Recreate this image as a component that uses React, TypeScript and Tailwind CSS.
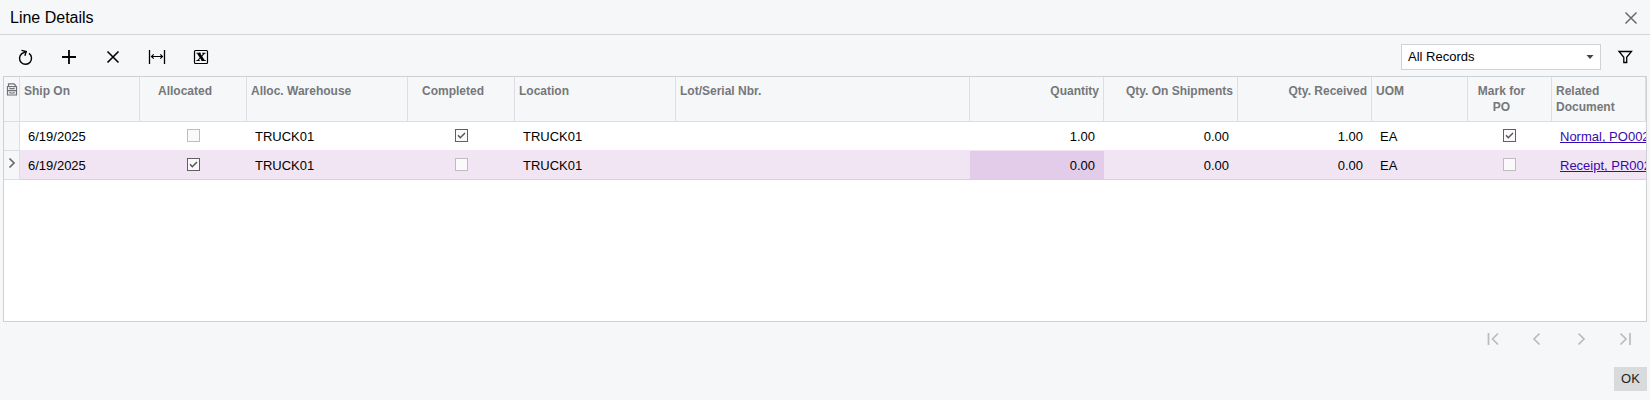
import { useState } from "react";
import type { ReactNode } from "react";
import clsx from "clsx";

type Row = {
  shipOn: string;
  allocated: boolean;
  warehouse: string;
  completed: boolean;
  location: string;
  lot: string;
  quantity: string;
  onShipments: string;
  received: string;
  uom: string;
  markForPo: boolean;
  document: string;
};

const initialRows: Row[] = [
  {
    shipOn: "6/19/2025",
    allocated: false,
    warehouse: "TRUCK01",
    completed: true,
    location: "TRUCK01",
    lot: "",
    quantity: "1.00",
    onShipments: "0.00",
    received: "1.00",
    uom: "EA",
    markForPo: true,
    document: "Normal, PO002",
  },
  {
    shipOn: "6/19/2025",
    allocated: true,
    warehouse: "TRUCK01",
    completed: false,
    location: "TRUCK01",
    lot: "",
    quantity: "0.00",
    onShipments: "0.00",
    received: "0.00",
    uom: "EA",
    markForPo: false,
    document: "Receipt, PR002",
  },
];

type Column = {
  key: keyof Row;
  title: string;
  width: string;
  kind: "text" | "check" | "number" | "link";
};

const columns: Column[] = [
  { key: "shipOn", title: "Ship On", width: "w-[120px]", kind: "text" },
  { key: "allocated", title: "Allocated", width: "w-[107px]", kind: "check" },
  { key: "warehouse", title: "Alloc. Warehouse", width: "w-[161px]", kind: "text" },
  { key: "completed", title: "Completed", width: "w-[107px]", kind: "check" },
  { key: "location", title: "Location", width: "w-[161px]", kind: "text" },
  { key: "lot", title: "Lot/Serial Nbr.", width: "", kind: "text" },
  { key: "quantity", title: "Quantity", width: "w-[134px]", kind: "number" },
  { key: "onShipments", title: "Qty. On Shipments", width: "w-[134px]", kind: "number" },
  { key: "received", title: "Qty. Received", width: "w-[134px]", kind: "number" },
  { key: "uom", title: "UOM", width: "w-[96px]", kind: "text" },
  { key: "markForPo", title: "Mark for PO", width: "w-[84px]", kind: "check" },
  { key: "document", title: "Related Document", width: "w-[94px]", kind: "link" },
];

function ToolButton({ label, disabled, children }: { label: string; disabled?: boolean; children: ReactNode }) {
  return (
    <button
      type="button"
      aria-label={label}
      title={label}
      disabled={disabled}
      className="flex h-8 w-11 items-center justify-center text-black disabled:text-[#b9bbbd]"
    >
      <svg width="20" height="20" viewBox="0 0 20 20" fill="none" stroke="currentColor" strokeWidth="1.4">
        {children}
      </svg>
    </button>
  );
}

function CheckCell({ label, checked, onChange }: { label: string; checked: boolean; onChange: () => void }) {
  return (
    <label className="mx-auto grid w-[13px]">
      <input
        type="checkbox"
        aria-label={label}
        checked={checked}
        onChange={onChange}
        className="col-start-1 row-start-1 size-[13px] appearance-none border border-[#bdbdbf] bg-[#fbf9fc] checked:border-[#606062]"
      />
      {checked && (
        <svg
          viewBox="0 0 13 13"
          className="pointer-events-none col-start-1 row-start-1 size-[13px]"
          fill="none"
          stroke="#555"
          strokeWidth="1.5"
        >
          <path d="M3 6.3l2.3 2.4L10 4" />
        </svg>
      )}
    </label>
  );
}

export default function App() {
  const [rows, setRows] = useState(initialRows);
  const [selected, setSelected] = useState(1);

  const toggle = (index: number, key: keyof Row) =>
    setRows((prev) => prev.map((row, i) => (i === index ? { ...row, [key]: !row[key] } : row)));

  return (
    <div className="flex min-h-screen flex-col bg-[#f5f7f9] font-['Liberation_Sans',Arial,sans-serif] text-[13px] text-black">
      <header className="flex h-[35px] items-center justify-between border-b border-[#d2d4d7] pt-0.5 pr-2 pl-2.5">
        <h1 className="text-base">Line Details</h1>
        <button type="button" aria-label="Close" className="p-1 text-[#6b6b6b]">
          <svg width="14" height="14" viewBox="0 0 14 14" fill="none" stroke="currentColor" strokeWidth="1.5">
            <path d="M1.5 1.5l11 11M12.5 1.5l-11 11" />
          </svg>
        </button>
      </header>

      <div className="flex h-[41px] items-center justify-between px-[3px] pt-0.5">
        <div className="flex">
          <ToolButton label="Refresh">
            <path d="M14 6.4a6 6 0 1 1-7.2.2L11 4.6" />
            <path d="M6.5 3.4l4.700 1.100-1.300 4.300" />
          </ToolButton>
          <ToolButton label="Add row">
            <path d="M10 3v14M3 10h14" strokeWidth="1.8" />
          </ToolButton>
          <ToolButton label="Delete row">
            <path d="M4.500 4.500l11 11M15.500 4.500l-11 11" strokeWidth="1.600" />
          </ToolButton>
          <ToolButton label="Fit to screen">
            <path d="M2.500 3v14M17.500 3v14" strokeWidth="1.300" />
            <path d="M4.500 9.500h11M6.700 7.300l-2.200 2.200 2.200 2.200M13.300 7.300l2.200 2.200-2.200 2.200" strokeWidth="1.200" />
          </ToolButton>
          <ToolButton label="Export to Excel">
            <rect x="3.500" y="3.500" width="13" height="13" rx="1" strokeWidth="1.200" />
            <path d="M7.500 6.200l4.800 7.300" strokeWidth="2.800" />
            <path d="M13.200 6.300L6.800 13.500M5.500 6.200h4.300M11.200 6.200h3.300M5.400 13.500h3.300M10.500 13.500h4.300" strokeWidth="1.100" />
          </ToolButton>
        </div>

        <div className="flex items-center">
          <div className="mr-0.5 grid w-[200px] items-center">
            <select
              aria-label="Filter"
              className="col-start-1 row-start-1 h-[26px] w-full appearance-none border border-[#d0d2d5] bg-white px-1.5"
            >
              <option>All Records</option>
            </select>
            <svg
              width="8"
              height="4"
              viewBox="0 0 8 4"
              className="pointer-events-none col-start-1 row-start-1 mr-[7px] justify-self-end"
            >
              <path d="M0.5 0h7L4 4z" fill="#444" />
            </svg>
          </div>
          <ToolButton label="Filter settings">
            <path d="M4 4.500h12.500l-4.800 5.800v5.200H8.800v-5.200z" strokeWidth="1.300" />
          </ToolButton>
        </div>
      </div>

      <main className="mx-[3px] flex-1 overflow-hidden border border-[#ced1d4] bg-white">
        <table className="w-full table-fixed border-separate border-spacing-0">
          <thead>
            <tr className="h-[45px] bg-[#f5f7f9] text-xs leading-4 text-[#75777a]">
              <th className="w-4 border-r border-b border-[#dcdee1] pt-1.5 align-top">
                <svg
                  width="12"
                  height="13"
                  viewBox="0 0 12 13"
                  fill="none"
                  stroke="#6f7174"
                  strokeWidth="1.200"
                  role="img"
                  aria-label="Column settings"
                  className="ml-[2px]"
                >
                  <path d="M1.500 3.500v8.500h9V3.500zM2.500 3V.8h5.500L10 3" />
                  <path d="M1.500 7.600h9" />
                  <path d="M4 4.500v1.200h4V4.500M4 8.800V10h4V8.800" />
                </svg>
              </th>
              {columns.map((col) => (
                <th
                  key={col.key}
                  scope="col"
                  className={clsx(
                    "border-r border-b border-[#dcdee1] pt-1.5 pl-1 align-top font-bold",
                    col.width,
                    col.kind === "number" && "pr-1 text-right",
                    col.kind === "check" && "pr-5 text-center",
                    (col.kind === "text" || col.kind === "link") && "pr-1 text-left",
                  )}
                >
                  {col.title}
                </th>
              ))}
            </tr>
          </thead>
          <tbody>
            {rows.map((row, i) => {
              const active = i === selected;
              return (
                <tr key={i} onClick={() => setSelected(i)} className={clsx("h-[29px]", active && "bg-[#f1e5f4]")}>
                  <td className="border-r border-b border-[#dcdee1] bg-[#f5f7f9]">
                    {active && (
                      <svg width="8" height="12" viewBox="0 0 8 12" className="mx-auto mb-1" fill="none" stroke="#68696b" strokeWidth="1.700">
                        <path d="M1.500 1.500L6 6l-4.500 4.500" />
                      </svg>
                    )}
                  </td>
                  {columns.map((col) => (
                    <td
                      key={col.key}
                      className={clsx(
                        "overflow-hidden border-b whitespace-nowrap",
                        active ? "border-[#d4d3d8]" : "border-[#f1e5f4]",
                        active && col.key === "quantity" && "bg-[#e2cce9]",
                        col.kind === "number" && "pt-0.5 pr-[9px] text-right",
                        col.kind === "check" && "pr-px pb-0.5",
                        (col.kind === "text" || col.kind === "link") && "pt-0.5 pl-2",
                      )}
                    >
                      {col.kind === "check" && (
                        <CheckCell label={col.title} checked={Boolean(row[col.key])} onChange={() => toggle(i, col.key)} />
                      )}
                      {col.kind === "link" && (
                        <a href="#document" className="text-[#3a08b0] underline">
                          {row[col.key]}
                        </a>
                      )}
                      {(col.kind === "text" || col.kind === "number") && row[col.key]}
                    </td>
                  ))}
                </tr>
              );
            })}
          </tbody>
        </table>
      </main>

      <nav aria-label="Pages" className="flex justify-end px-[3px] pt-px">
        <ToolButton label="First page" disabled>
          <path d="M5.500 4v12M15 4.500L9.500 10l5.500 5.500" strokeWidth="1.700" />
        </ToolButton>
        <ToolButton label="Previous page" disabled>
          <path d="M12.500 4.500L7 10l5.500 5.500" strokeWidth="1.700" />
        </ToolButton>
        <ToolButton label="Next page" disabled>
          <path d="M7.500 4.500L13 10l-5.500 5.500" strokeWidth="1.700" />
        </ToolButton>
        <ToolButton label="Last page" disabled>
          <path d="M5.500 4.500L11 10l-5.500 5.500M15 4v12" strokeWidth="1.700" />
        </ToolButton>
      </nav>

      <footer className="flex justify-end px-[3px] pt-3 pb-[9px]">
        <button type="button" className="h-6 w-[33px] bg-[#d9dadc] text-[#222]">
          OK
        </button>
      </footer>
    </div>
  );
}
